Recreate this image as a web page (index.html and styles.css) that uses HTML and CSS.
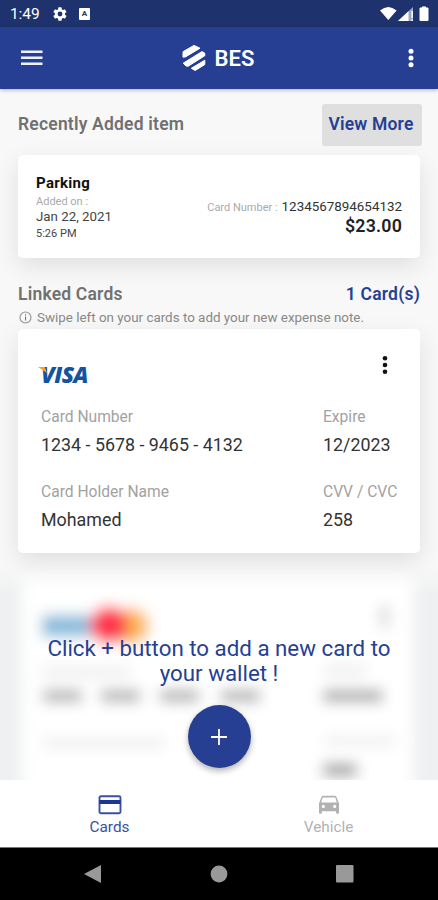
FILE: index.html
```html
<!DOCTYPE html>
<html lang="en">
<head>
    <meta charset="UTF-8">
    <meta name="viewport" content="width=device-width, initial-scale=1.0">
    <title>BES</title>
    <link rel="stylesheet" href="styles.css">
</head>
<body>

<div class="status-bar">
    <span class="time">1:49</span>
    <svg class="status-gear" width="16" height="16" viewBox="0 0 24 24"><path fill="#fff" d="M19.4 13a7.500 7.500 0 0 0 0-2l2.100-1.600a.5.5 0 0 0 .1-.6l-2-3.500a.5.5 0 0 0-.6-.2l-2.500 1a7.300 7.300 0 0 0-1.700-1l-.4-2.600a.5.5 0 0 0-.5-.5h-4a.5.5 0 0 0-.5.500L9 5.100a7.300 7.300 0 0 0-1.700 1l-2.500-1a.5.5 0 0 0-.6.2l-2 3.500a.5.5 0 0 0 .1.6L4.500 11a7.500 7.500 0 0 0 0 2l-2.200 1.600a.5.5 0 0 0-.1.6l2 3.500c.1.2.4.3.6.2l2.500-1a7.300 7.300 0 0 0 1.700 1l.4 2.600c0 .3.2.5.5.5h4c.3 0 .5-.2.5-.5l.4-2.600a7.300 7.300 0 0 0 1.700-1l2.500 1c.2.1.5 0 .6-.2l2-3.500a.5.5 0 0 0-.1-.6zM12 15.600a3.600 3.600 0 1 1 0-7.200 3.600 3.600 0 0 1 0 7.200z"/></svg>
    <span class="status-app">A</span>
    <svg class="status-signal" width="51" height="16" viewBox="0 0 51 16">
        <path fill="#fff" d="M1 4.500Q9.300-2.500 17.600 4.500L9.300 14z"/>
        <path fill="#9aa6cc" d="M34 1v14H19z"/>
        <path fill="#fff" d="M29.500 5.200V15H19z"/>
        <path fill="#fff" d="M32.500 5h1.500v7h-1.500zM32.500 13.500h1.500V15h-1.500z"/>
        <path fill="#fff" d="M43 1.500V.5h4v1h1.500q1 0 1 1V14q0 1-1 1h-7q-1 0-1-1V2.500q0-1 1-1z"/>
    </svg>
</div>

<header class="app-bar">
    <svg width="22" height="16" viewBox="0 0 22 16"><path fill="#f0f2f8" d="M0 .5h21.500v2.600H0zM0 6.500h21.500v2.600H0zM0 12.500h21.500v2.600H0z"/></svg>
    <div class="brand">
        <svg width="24" height="28" viewBox="0 0 24 28">
            <path fill="#fff" stroke="#fff" stroke-width="1" stroke-linejoin="round" d="M1 13.200V7.700L12 1.400 18 4.200 3.500 12.900zM1.200 19.200L20 7.600 22.800 9.200V11.700L6.200 22.200 4 22zM9.300 24.300L22.800 16.200V20.500L13.200 26.500z"/>
        </svg>
        <h1>BES</h1>
    </div>
    <svg width="6" height="20" viewBox="0 0 6 20"><g fill="#fff"><circle cx="3" cy="3.200" r="2.500"/><circle cx="3" cy="10" r="2.500"/><circle cx="3" cy="16.800" r="2.500"/></g></svg>
</header>

<main>
    <div class="section-head">
        <h2>Recently Added item</h2>
        <button class="view-more">View More</button>
    </div>

    <section class="card recent">
        <div class="recent-left">
            <h3>Parking</h3>
            <p class="muted">Added on :</p>
            <p class="date">Jan 22, 2021</p>
            <p class="hour">5:26 PM</p>
        </div>
        <div class="recent-right">
            <p class="number"><span class="muted">Card Number :</span> <span class="digits">1234567894654132</span></p>
            <p class="amount">$23.00</p>
        </div>
    </section>

    <div class="linked-head">
        <h2>Linked Cards</h2>
        <span class="count">1 Card(s)</span>
    </div>
    <p class="hint">
        <svg width="13" height="13" viewBox="0 0 13 13"><circle cx="6.500" cy="6.500" r="5.500" fill="none" stroke="#8d9297" stroke-width="1.100"/><path fill="#777" d="M6 5.600h1.100v4H6zM6 3.200h1.100v1.200H6z"/></svg>
        <span>Swipe left on your cards to add your new expense note.</span>
    </p>

    <section class="card bank-card">
        <div class="card-top">
            <div class="visa"><span>VISA</span></div>
            <svg width="6" height="20" viewBox="0 0 6 20"><g fill="#111"><circle cx="3" cy="3.200" r="2.300"/><circle cx="3" cy="10" r="2.300"/><circle cx="3" cy="16.800" r="2.300"/></g></svg>
        </div>
        <dl class="fields">
            <div><dt>Card Number</dt><dd>1234 - 5678 - 9465 - 4132</dd></div>
            <div><dt>Expire</dt><dd>12/2023</dd></div>
            <div><dt>Card Holder Name</dt><dd>Mohamed</dd></div>
            <div><dt>CVV / CVC</dt><dd>258</dd></div>
        </dl>
    </section>

    <section class="add-card">
        <svg class="ghost" width="438" height="230" viewBox="0 0 438 230">
            <defs>
                <filter id="soft" x="-20%" y="-20%" width="140%" height="140%"><feGaussianBlur stdDeviation="7"/></filter>
            </defs>
            <rect x="-30" width="498" height="260" fill="#eff0f1"/>
            <g filter="url(#soft)">
                <rect x="22" y="0" width="392" height="265" rx="6" fill="#fff"/>
                <rect x="42" y="55" width="48" height="22" fill="#87bbdc"/>
                <ellipse cx="131" cy="66" rx="18" ry="18" fill="#ffb552"/>
                <circle cx="109" cy="65" r="19" fill="#ff3850"/>
                <path fill="#d8d8d8" d="M380 45h9v23h-9z"/>
                <path fill="#f0f0f0" d="M43 106h88v12H43zM324 104h42v13h-42zM43 178h122v11H43zM324 176h72v10h-72z"/>
                <path fill="#adadad" d="M43 130h39v12H43zM101 130h39v12h-39zM160 130h39v12h-39zM221 130h39v12h-39z"/>
                <path fill="#a5a5a5" d="M323 130h60v12h-60zM323 203h34v14h-34z"/>
            </g>
        </svg>
        <div class="add-content">
            <p>Click + button to add a new card to<br>your wallet !</p>
            <button class="fab" aria-label="Add card"><svg width="16" height="16" viewBox="0 0 16 16"><path stroke="#fff" stroke-width="1.800" d="M8 0v16M0 8h16"/></svg></button>
        </div>
    </section>
</main>

<nav class="tabs">
    <a class="tab active">
        <svg width="24" height="20" viewBox="0 0 24 20"><rect x="1.500" y="1.200" width="21" height="17" rx="1.500" fill="none" stroke="#3a50a2" stroke-width="1.900"/><path fill="#1d3694" d="M1.500 5h21v4h-21z"/></svg>
        <span>Cards</span>
    </a>
    <a class="tab">
        <svg width="24" height="20" viewBox="0 0 24 20"><path fill="#b2b2b2" fill-rule="evenodd" d="M4.500 1.900Q4.900.8 6.100.8h11.800q1.200 0 1.600 1.100L22 8.500v9.300q0 .9-.9.900H20q-.9 0-.9-.9v-1.600H4.900v1.600q0 .9-.9.900H2.900q-.9 0-.9-.9V8.500zM4.200 7.500h15.600L18.300 2.600H5.700zM6.300 9.800a1.600 1.600 0 1 0 0 3.200 1.600 1.600 0 0 0 0-3.200zm11.400 0a1.600 1.600 0 1 0 0 3.200 1.600 1.600 0 0 0 0-3.200z"/></svg>
        <span>Vehicle</span>
    </a>
</nav>

<div class="system-nav">
    <svg width="18" height="20" viewBox="0 0 18 20"><path fill="#999" d="M0 10L17 1v18z"/></svg>
    <svg width="18" height="18" viewBox="0 0 18 18"><circle cx="9" cy="9" r="8.400" fill="#999"/></svg>
    <svg width="18" height="18" viewBox="0 0 18 18"><rect width="17.500" height="17.500" rx="1" fill="#999"/></svg>
</div>

</body>
</html>
```

FILE: styles.css
```css
* { box-sizing: border-box; }
body { margin: 0; height: 900px; display: flex; flex-direction: column; overflow: hidden; font-family: Roboto, "Liberation Sans", sans-serif; background: #fafafa; color: #333; }
h1, h2, h3, p, dl, dd { margin: 0; }
svg { display: block; flex: none; }
button { border: none; font-family: inherit; }

.status-bar { height: 27px; flex: none; background: #1e326d; display: flex; align-items: center; padding: 1px 8px 0 10px; color: #fff; }
.time { font-size: 15.500px; width: 42px; letter-spacing: -0.1px; }
.status-app { width: 11px; height: 12px; margin-left: 11px; border-radius: 1px; background: #fff; color: #1e326d; font-size: 8px; font-weight: 700; line-height: 12px; text-align: center; }
.status-signal { margin-left: auto; }

.app-bar { height: 62px; flex: none; background: #263f93; display: flex; align-items: center; justify-content: space-between; padding: 0 24px 0 21px; position: relative; box-shadow: 0 1px 4px rgba(0,0,0,0.3); z-index: 1; }
.brand { display: flex; align-items: center; gap: 9px; margin-left: -15px; }
.brand h1 { color: #fff; font-size: 22px; font-weight: 600; line-height: 28px; padding-top: 2px; }

main { flex: 1; min-height: 0; overflow: hidden; padding: 15px 18px 0; background: #f8f8f8; }
.section-head { display: flex; justify-content: space-between; align-items: center; margin-right: -2px; height: 42px; }
h2 { font-size: 17.500px; font-weight: 600; color: #717171; line-height: 22px; letter-spacing: 0.2px; }
.section-head h2 { margin-top: -3px; }
.view-more { width: 100px; height: 42px; padding: 0 2px 3px 0; border-radius: 3px; background: #dfdfdf; color: #263f93; font-size: 17.500px; font-weight: 600; letter-spacing: 0.2px; }

.card { background: #fff; border-radius: 5px; box-shadow: 0 8px 24px rgba(0,0,0,0.1); }
.recent { height: 103px; margin-top: 9px; padding: 18px 18px 0; display: flex; justify-content: space-between; }
.recent h3 { font-size: 15px; font-weight: 700; color: #111; line-height: 20px; letter-spacing: 0.3px; }
.muted { font-size: 11px; line-height: 18px; color: #aaa; }
.date { font-size: 13.300px; line-height: 11px; color: #444; }
.hour { font-size: 11px; line-height: 23px; color: #444; }
.recent-right { padding-top: 24px; text-align: right; white-space: nowrap; }
.number { line-height: 18px; }
.digits { font-size: 13.400px; color: #333; }
.amount { font-size: 17.800px; font-weight: 600; color: #222; line-height: 18px; letter-spacing: 0.2px; }

.linked-head { display: flex; justify-content: space-between; margin-top: 25px; }
.count { font-size: 17.500px; font-weight: 600; line-height: 22px; color: #263f93; letter-spacing: 0.2px; }
.hint { display: flex; align-items: center; gap: 5px; height: 24px; padding-left: 1px; color: #888; font-size: 13.400px; white-space: nowrap; }

.bank-card { height: 224px; padding: 26px 32px 0 23px; }
.card-top { display: flex; justify-content: space-between; height: 52px; }
.visa { position: relative; margin-top: 8px; font: italic 800 22.500px/24px "Open Sans", sans-serif; color: #14539f; letter-spacing: -0.6px; }
.visa::before { content: ""; position: absolute; left: -3px; top: 4px; width: 9px; height: 6px; background: #f5a233; clip-path: polygon(0 0, 75% 0, 100% 100%); z-index: 1; }
.fields { display: grid; grid-template-columns: 282px 1fr; row-gap: 17px; white-space: nowrap; }
dt { font-size: 15.600px; line-height: 20px; color: #a2a2a2; }
dd { font-size: 17.850px; line-height: 20px; margin-top: 8px; color: #333; }
.bank-card dd { padding-bottom: 10px; }

.add-card { position: relative; height: 227px; margin: 0 -18px; }
.ghost { position: absolute; left: 0; top: 7px; -webkit-mask: linear-gradient(transparent 8px, #000 32px); mask: linear-gradient(transparent 8px, #000 32px); }
.add-content { position: relative; padding-top: 83px; text-align: center; }
.add-content p { font-size: 22.300px; line-height: 25px; color: #263f93; white-space: nowrap; }
.fab { display: flex; align-items: center; justify-content: center; width: 63px; height: 63px; margin: 19px auto 0; border-radius: 50%; background: #263f93; box-shadow: 0 3px 6px rgba(0,0,0,0.3); }

.tabs { display: flex; height: 67px; flex: none; background: #fff; }
.tab { flex: 1; display: flex; flex-direction: column; align-items: center; padding-top: 15px; color: #b2b2b2; font-size: 15.300px; }
.tab span { line-height: 24px; }
.tab.active { color: #3a50a2; }

.system-nav { height: 53px; flex: none; background: #000; border-top: 1px solid #777; display: flex; align-items: center; justify-content: space-between; padding: 0 84px; }
```
